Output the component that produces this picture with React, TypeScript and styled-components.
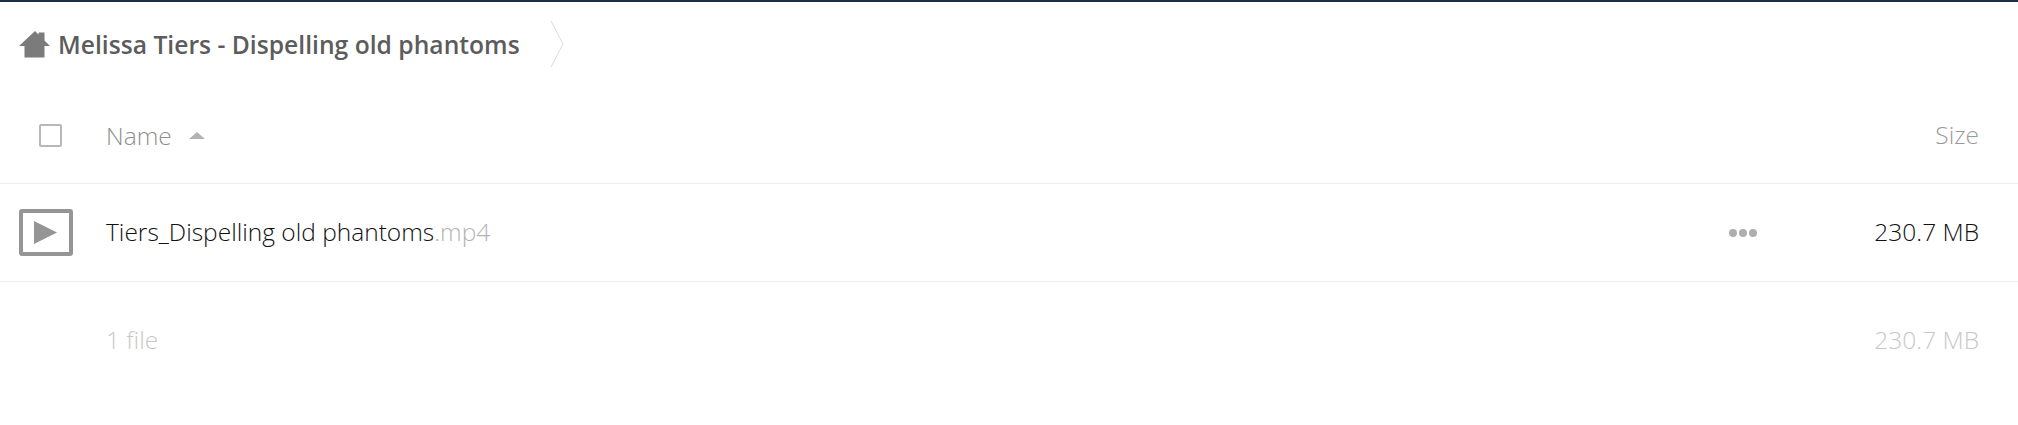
import React from "react";
import styled, { createGlobalStyle } from "styled-components";

const Global = createGlobalStyle`
  html, body { margin: 0; padding: 0; background: #fff; }
  body { font-family: "Open Sans", "Liberation Sans", sans-serif; }
`;

const Page = styled.div`
  display: flex;
  flex-direction: column;
  height: 425px;
  border-top: 2px solid #1d2d44;
  box-sizing: border-box;
  overflow: hidden;
`;

const Breadcrumb = styled.nav`
  display: flex;
  align-items: center;
  height: 86px;
  padding-left: 19px;
  flex: none;
`;

const Title = styled.span`
  margin-left: 7px;
  padding-bottom: 2px;
  font-size: 24.67px;
  font-weight: 600;
  color: #5c5c5c;
  white-space: nowrap;
`;

const Crumb = styled.svg`
  margin-left: 30px;
  margin-bottom: 2px;
  flex: none;
`;

const Row = styled.div<{ $height: number; $border?: boolean }>`
  display: grid;
  grid-template-columns: 106px 1fr 80px 170px;
  align-items: center;
  height: ${(p) => p.$height}px;
  padding-right: 39px;
  flex: none;
  box-sizing: content-box;
  border-bottom: ${(p) => (p.$border ? "1px solid #eee" : "none")};
`;

const Lead = styled.div`
  display: flex;
  align-items: center;
`;

const CheckBox = styled.span`
  display: block;
  width: 23px;
  height: 23px;
  margin-left: 39px;
  box-sizing: border-box;
  border: 2px solid #b8b8b8;
  border-radius: 2px;
`;

const PlayIcon = styled.svg`
  display: block;
  margin-left: 19px;
`;

const HeadName = styled.div`
  display: flex;
  align-items: center;
  gap: 17px;
  padding-bottom: 1px;
  font-size: 24.5px;
  font-weight: 300;
  color: #8f8f8f;
`;

const SortArrow = styled.span`
  width: 0;
  height: 0;
  border-left: 8px solid transparent;
  border-right: 8px solid transparent;
  border-bottom: 7px solid #b3b3b3;
`;

const Right = styled.div<{ $color: string }>`
  grid-column: 4;
  padding-bottom: 2px;
  text-align: right;
  font-size: 24.5px;
  font-weight: 300;
  color: ${(p) => p.$color};
`;

const FileName = styled.div`
  padding-bottom: 2px;
  font-size: 24.5px;
  font-weight: 300;
  color: #111;
  white-space: nowrap;
`;

const Extension = styled.span`
  color: #b3b3b3;
`;

const Dots = styled.div`
  display: flex;
  gap: 2px;
`;

const Dot = styled.span`
  width: 8px;
  height: 8px;
  border-radius: 50%;
  background: #aeaeae;
`;

const Summary = styled.div`
  padding-bottom: 2px;
  font-size: 24.5px;
  font-weight: 300;
  color: #c8c8c8;
`;

export default function App() {
  return (
    <>
      <Global />
      <Page>
        <Breadcrumb>
          <svg width="32" height="28" viewBox="0 0 32 28" fill="#7b7b7b">
            <path d="M0 15 16 0 19.5 3.5V1.5H25.5V9.5L31 15H25.5V26.5H5.5V15z" />
          </svg>
          <Title>Melissa Tiers - Dispelling old phantoms</Title>
          <Crumb width="14" height="48" viewBox="0 0 14 48" fill="none" stroke="#dcdcdc" strokeWidth="1">
            <path d="M1 1 13 24 1 47" />
          </Crumb>
        </Breadcrumb>
        <Row $height={95} $border>
          <Lead>
            <CheckBox />
          </Lead>
          <HeadName>
            Name
            <SortArrow />
          </HeadName>
          <Right $color="#9a9a9a">Size</Right>
        </Row>
        <Row $height={97} $border>
          <Lead>
            <PlayIcon width="54" height="47" viewBox="0 0 54 47">
              <rect x="2" y="2" width="50" height="43" rx="1" fill="none" stroke="#959595" strokeWidth="4" />
              <path d="M15 12 38 23.5 15 35z" fill="#959595" />
            </PlayIcon>
          </Lead>
          <FileName>
            Tiers_Dispelling old phantoms<Extension>.mp4</Extension>
          </FileName>
          <Dots>
            <Dot />
            <Dot />
            <Dot />
          </Dots>
          <Right $color="#111">230.7 MB</Right>
        </Row>
        <Row $height={116}>
          <span />
          <Summary>1 file</Summary>
          <Right $color="#c8c8c8">230.7 MB</Right>
        </Row>
      </Page>
    </>
  );
}
